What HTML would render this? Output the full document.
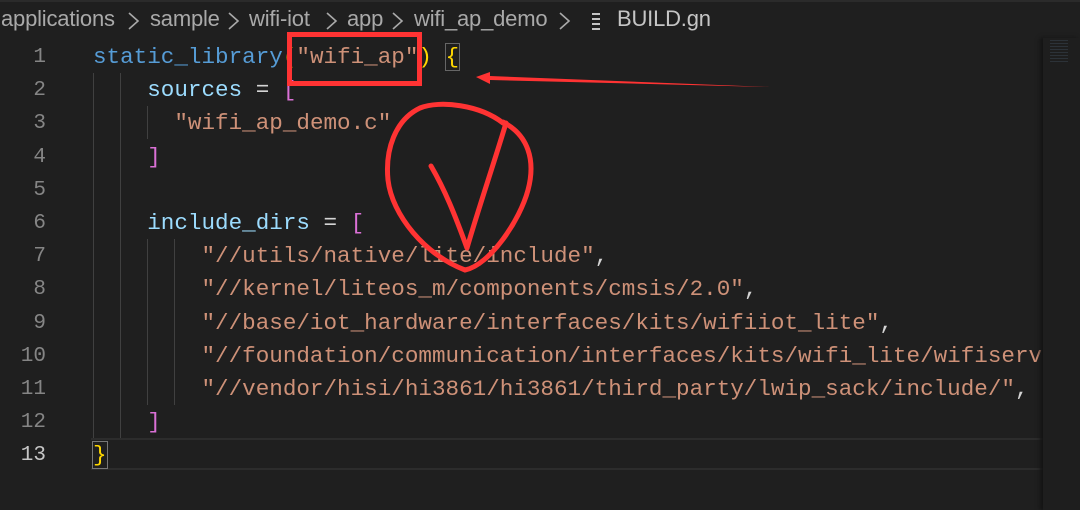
<!DOCTYPE html>
<html><head><meta charset="utf-8"><style>
body{margin:0;width:1080px;height:510px;background:#1f1f1f;overflow:hidden;position:relative;font-family:"Liberation Mono",monospace}
.bc{position:absolute;top:6px;font:22px "Liberation Sans","DejaVu Sans",sans-serif;color:#a9a9a9;white-space:nowrap;letter-spacing:-0.2px}
.ch{position:absolute;top:10px}
.ed{position:absolute;top:41px;left:0;width:1080px}
.ln{position:absolute;left:0;width:46px;text-align:right;font-size:21px;color:#858585;height:33.2px;line-height:33.2px}
.cd{position:absolute;left:93px;font-size:22.6px;height:33.2px;line-height:33.2px;white-space:pre;color:#d4d4d4}
.b{color:#569cd6}.v{color:#9cdcfe}.s1{color:#ce9178}.y{color:#ffd700}.p{color:#da70d6}
.g{position:absolute;width:1px;background:#404040}
</style></head><body>
<div style="position:absolute;top:0;left:0;width:1080px;height:2px;background:#2b2b2b"></div>
<div class="bc" style="left:1px">applications</div>
<div class="bc" style="left:150px">sample</div>
<div class="bc" style="left:249px">wifi-iot</div>
<div class="bc" style="left:347px">app</div>
<div class="bc" style="left:414px">wifi_ap_demo</div>
<div class="bc" style="left:617px;color:#c5c5c5">BUILD.gn</div>
<svg class="ch" style="left:0" width="600" height="22"><g fill="none" stroke="#a9a9a9" stroke-width="1.6"><path d="M129 3 L138 11 L129 19"/><path d="M229 3 L238 11 L229 19"/><path d="M327 3 L336 11 L327 19"/><path d="M393 3 L402 11 L393 19"/><path d="M560 3 L569 11 L560 19"/></g><g stroke="#c5c5c5" stroke-width="2"><path d="M592 4 H605 M592 9 H602 M592 14 H605 M592 19 H601"/></g></svg>
<div style="position:absolute;left:91px;top:438px;width:952px;height:32px;border-top:2px solid #2c2c2c;border-bottom:2px solid #2c2c2c;box-sizing:border-box"></div>
<div class="g" style="left:93px;top:73px;height:365px"></div>
<div class="g" style="left:120px;top:73px;height:365px"></div>
<div class="g" style="left:147px;top:106px;height:33px"></div>
<div class="g" style="left:147px;top:239px;height:166px"></div>
<div class="g" style="left:174px;top:239px;height:166px"></div>
<div class="ed">
<div class="ln" style="top:0">1</div><div class="cd" style="top:0"><span class="b">static_library</span><span class="y">(</span><span class="s1">"wifi_ap"</span><span class="y">)</span> <span class="y" style="outline:1px solid #666">{</span></div>
<div class="ln" style="top:33.2px">2</div><div class="cd" style="top:33.2px">    <span class="v">sources</span> = <span class="p">[</span></div>
<div class="ln" style="top:66.4px">3</div><div class="cd" style="top:66.4px">      <span class="s1">"wifi_ap_demo.c"</span></div>
<div class="ln" style="top:99.6px">4</div><div class="cd" style="top:99.6px">    <span class="p">]</span></div>
<div class="ln" style="top:132.8px">5</div>
<div class="ln" style="top:166px">6</div><div class="cd" style="top:166px">    <span class="v">include_dirs</span> = <span class="p">[</span></div>
<div class="ln" style="top:199.2px">7</div><div class="cd" style="top:199.2px">        <span class="s1">"//utils/native/lite/include"</span>,</div>
<div class="ln" style="top:232.4px">8</div><div class="cd" style="top:232.4px">        <span class="s1">"//kernel/liteos_m/components/cmsis/2.0"</span>,</div>
<div class="ln" style="top:265.6px">9</div><div class="cd" style="top:265.6px">        <span class="s1">"//base/iot_hardware/interfaces/kits/wifiiot_lite"</span>,</div>
<div class="ln" style="top:298.8px">10</div><div class="cd" style="top:298.8px">        <span class="s1">"//foundation/communication/interfaces/kits/wifi_lite/wifiservice"</span>,</div>
<div class="ln" style="top:332px">11</div><div class="cd" style="top:332px">        <span class="s1">"//vendor/hisi/hi3861/hi3861/third_party/lwip_sack/include/"</span>,</div>
<div class="ln" style="top:365.2px">12</div><div class="cd" style="top:365.2px">    <span class="p">]</span></div>
<div class="ln" style="top:398.4px;color:#c6c6c6">13</div><div class="cd" style="top:398.4px"><span class="y" style="outline:1px solid #777">}</span></div>
</div>
<div style="position:absolute;left:1043px;top:38px;width:37px;height:472px;background:#1e1e1e;box-shadow:-3px 0 4px #141414"></div>
<div style="position:absolute;left:1050px;top:40px;width:18px;height:22px;background:repeating-linear-gradient(#3a4652 0 1px,transparent 1px 3px);opacity:.5"></div>
<svg style="position:absolute;left:0;top:0" width="1080" height="510">
<rect x="289.5" y="34.5" width="130" height="49" fill="none" stroke="#ff3333" stroke-width="5"/>
<path d="M770 87 L490 76 L490 72 L476 77 L490 84 L490 80 Z" fill="#ff3333"/>
<path d="M503 123 C480 105 440 100 420 108 C395 120 385 150 388 180 C392 215 425 255 465 270 C490 265 520 220 528 190 C536 160 528 135 503 122" fill="none" stroke="#ff3333" stroke-width="5" stroke-linecap="round"/>
<path d="M431 166 C445 190 455 215 467 248 C478 210 495 160 506 123" fill="none" stroke="#ff3333" stroke-width="5" stroke-linecap="round" stroke-linejoin="round"/>
</svg>
</body></html>
